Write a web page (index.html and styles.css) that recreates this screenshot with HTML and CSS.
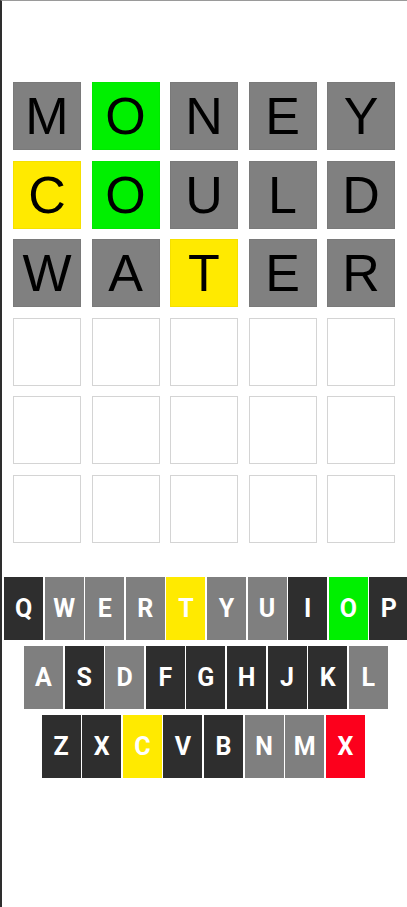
FILE: index.html
```html
<!DOCTYPE html>
<html lang="en">
<head>
<meta charset="utf-8">
<title>Wordle</title>
<link rel="stylesheet" href="styles.css">
</head>
<body>
<div class="frame">
  <main class="board">
    <div class="tile grey">M</div><div class="tile green">O</div><div class="tile grey">N</div><div class="tile grey">E</div><div class="tile grey">Y</div>
    <div class="tile yellow">C</div><div class="tile green">O</div><div class="tile grey">U</div><div class="tile grey">L</div><div class="tile grey">D</div>
    <div class="tile grey">W</div><div class="tile grey">A</div><div class="tile yellow">T</div><div class="tile grey">E</div><div class="tile grey">R</div>
    <div class="tile empty"></div><div class="tile empty"></div><div class="tile empty"></div><div class="tile empty"></div><div class="tile empty"></div>
    <div class="tile empty"></div><div class="tile empty"></div><div class="tile empty"></div><div class="tile empty"></div><div class="tile empty"></div>
    <div class="tile empty"></div><div class="tile empty"></div><div class="tile empty"></div><div class="tile empty"></div><div class="tile empty"></div>
  </main>
  <section class="keyboard">
    <div class="krow row1">
      <button class="key dark">Q</button><button class="key grey">W</button><button class="key grey">E</button><button class="key grey">R</button><button class="key yellow">T</button><button class="key grey">Y</button><button class="key grey">U</button><button class="key dark">I</button><button class="key green">O</button><button class="key dark">P</button>
    </div>
    <div class="krow row2">
      <button class="key grey">A</button><button class="key dark">S</button><button class="key grey">D</button><button class="key dark">F</button><button class="key dark">G</button><button class="key dark">H</button><button class="key dark">J</button><button class="key dark">K</button><button class="key grey">L</button>
    </div>
    <div class="krow row3">
      <button class="key dark">Z</button><button class="key dark">X</button><button class="key yellow">C</button><button class="key dark">V</button><button class="key dark">B</button><button class="key grey">N</button><button class="key grey">M</button><button class="key red">X</button>
    </div>
  </section>
</div>
</body>
</html>
```
FILE: styles.css
```css
html, body {
  margin: 0;
  padding: 0;
  background: #ffffff;
  overflow: hidden;
}

.frame {
  box-sizing: border-box;
  height: 907px;
  border-left: 2px solid #2e2e2e;
  border-top: 1px solid #9a9a9a;
}

.board {
  display: grid;
  grid-template-columns: repeat(5, 68px);
  grid-auto-rows: 68px;
  gap: 10.5px;
  justify-content: start;
  padding-top: 81px;
  padding-left: 11px;
}

.tile {
  box-sizing: border-box;
  display: flex;
  align-items: center;
  justify-content: center;
  font-family: "Liberation Sans", Arial, sans-serif;
  font-size: 52px;
  color: #000;
  line-height: 1;
}

.tile.grey { background: #808080; border: 1px solid #7a7a7a; }
.tile.green { background: #00f000; border: 1px solid #00e800; }
.tile.yellow { background: #ffea00; border: 1px solid #f5e000; }
.tile.empty { background: #fff; border: 1px solid #d4d4d4; }

.keyboard {
  margin-top: 34.5px;
  display: flex;
  flex-direction: column;
  gap: 6px;
}

.krow {
  display: flex;
  gap: 1.6px;
}

.row1 { padding-left: 2px; }
.row2 { padding-left: 22px; }
.row3 { padding-left: 39.7px; }

.key {
  flex: 0 0 39px;
  height: 63px;
  margin: 0;
  padding: 0;
  border: none;
  font-family: Roboto, "Noto Sans", sans-serif;
  font-weight: 700;
  font-size: 25px;
  color: #ffffff;
  display: flex;
  align-items: center;
  justify-content: center;
}

.key.dark { background: #2e2e2e; }
.key.grey { background: #7f7f7f; }
.key.yellow { background: #ffea00; }
.key.green { background: #00f000; }
.key.red { background: #fc001c; }
```
